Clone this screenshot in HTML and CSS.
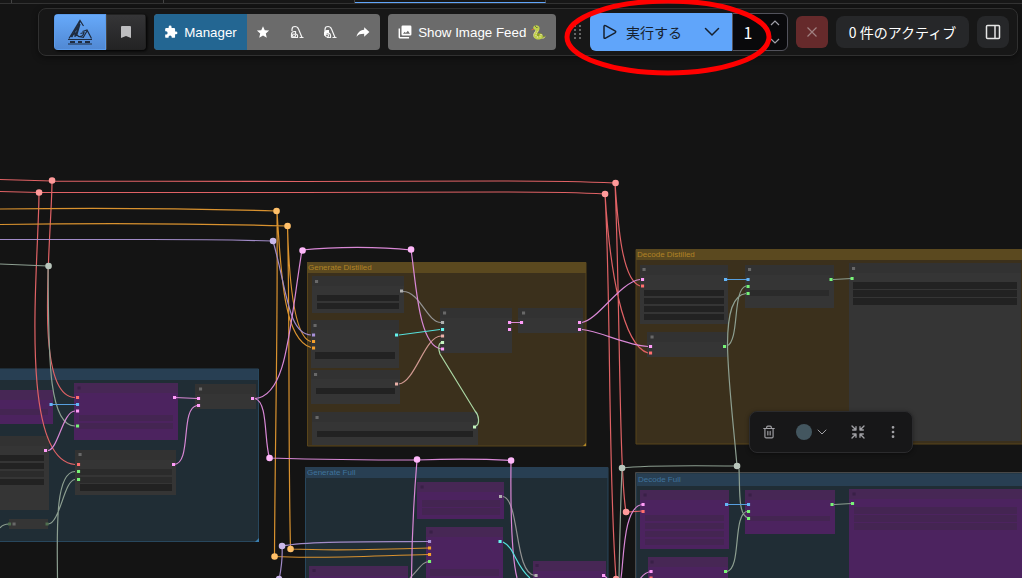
FILE: index.html
```html
<!DOCTYPE html>
<html lang="ja">
<head>
<meta charset="utf-8">
<meta name="viewport" content="width=device-width, initial-scale=1">
<title>Workflow</title>
<link rel="stylesheet" href="styles.css">
</head>
<body>
<div class="app">
  <div class="tabs">
    <div class="tab tab-edge"></div>
    <div class="tab tab-small"></div>
    <div class="tab"></div>
    <div class="tab tab-active"></div>
  </div>

  <main class="workspace">
    <svg class="graph" aria-label="Node graph">
      <!-- groups -->
      <g class="group blue">
        <path class="group-body" d="M-10 369H258.500V541.500H-10z"/>
        <path class="group-title" d="M-10 369H258V380H-10z"/>
        <path class="grip" d="M259 538v4h-4z"/>
      </g>
      <g class="group gold">
        <path class="group-body" d="M307.500 262.500H586V446H307.500z"/>
        <path class="group-title" d="M307 262H586V273H307z"/>
        <path class="grip" d="M586 443v3h-3z"/>
        <text x="308" y="270">Generate Distilled</text>
      </g>
      <g class="group blue">
        <path class="group-body" d="M305.500 467.500H608V620H305.500z"/>
        <path class="group-title" d="M305 467H608V478H305z"/>
        <text x="307" y="475">Generate Full</text>
      </g>
      <g class="group gold">
        <path class="group-body" d="M636 249.500H1400V444H636z"/>
        <path class="group-title" d="M636 249H1400V260H636z"/>
        <text x="637" y="257">Decode Distilled</text>
      </g>
      <g class="group blue">
        <path class="group-body" d="M636 473H1400V700H636z"/>
        <path class="group-title" d="M637 474H1400V486H637z"/>
        <path class="outline" d="M635.500 700V472.500H1400"/>
        <text x="638" y="482">Decode Full</text>
      </g>

      <!-- bypassed nodes -->
      <path class="node-purple" d="M-10 390H53V424H-10zM74 383H178V440H74zM417 482H504V519H417zM426 527H503V620H426zM309 566H408V620H309zM533 561H606V620H533zM640 490H729V549H640zM648 557H728V620H648zM745 490H835V534H745zM849 489H1400V700H849z"/>
      <path class="node-purple-head" d="M-10 390H53V400H-10zM74 383H178V393H74zM417 482H504V492H417zM426 527H503V537H426zM309 566H408V576H309zM533 561H606V571H533zM640 490H729V500H640zM648 557H728V567H648zM745 490H835V500H745zM849 489H1400V499H849z"/>
      <path class="field-purple" d="M-10 409H48V415H-10zM79 415H173V421H79zM79 423H173V429H79zM422 500H500V507H422zM422 508H500V515H422zM430 569H499V576H430zM645 515H724V521H645zM645 523H724V529H645zM645 531H724V537H645zM645 539H724V545H645zM750 516H830V521H750zM854 507H1017V514H854zM854 515H1017V522H854zM854 523H1017V530H854z"/>
      <path class="dots-purple" d="M79 388h.1M422 487h.1M431 532h.1M314 570.500h.1M537 565.500h.1M645 495h.1M652 562h.1M750 495h.1M854 494h.1"/>

      <!-- active nodes -->
      <path class="node-dark" d="M-10 436H49V510H-10zM75 450H176V495H75zM195 384H256V409H195zM9 519H48V529H9zM312 276H404V313H312zM311 320H399V368H311zM311 370H400V404H311zM312 412H478V445H312zM440 308H512V353H440zM518 308H583V333H518zM640 265H728V324H640zM647 332H727V357H647zM745 265H834V308H745zM849 263H1021V441H849z"/>
      <path class="node-dark-head" d="M-10 436H49V446H-10zM75 450H176V460H75zM195 384H256V394H195zM312 276H404V286H312zM311 320H399V330H311zM311 370H400V379H311zM312 412H478V422H312zM440 308H512V318H440zM518 308H583V318H518zM640 265H728V275H640zM647 332H727V342H647zM745 265H834V275H745zM849 263H1021V273H849z"/>
      <path class="field-dark" d="M-10 455H44V461H-10zM-10 463H44V469H-10zM-10 479H44V485H-10zM80 484H172V491H80zM317 295H399V301H317zM317 303H399V309H317zM315 352H395V359H315zM316 388H395V394H316zM317 431H473V437H317zM644 290H724V296H644zM644 298H724V304H644zM644 306H724V312H644zM644 314H724V320H644zM853 282H1017V289H853zM853 290H1017V297H853zM853 298H1017V305H853z"/>
      <path class="field-mid" d="M-10 471H44V477H-10zM80 469H172V475H80zM80 477H172V483H80zM750 290H829V296H750z"/>
      <path class="dots" d="M80 454.500h.1M200.500 389h.1M14 524h.1M316.500 281.500h.1M315 325.500h.1M315.500 374.500h.1M317 417.500h.1M444.500 313h.1M523.500 313h.1M644 269.500h.1M652 337h.1M749.500 269.500h.1M853.500 268.500h.1"/>

      <!-- links -->
      <g class="links">
        <path class="red" d="M0 179.500L52 181L300 181.500L500 181Q570 181 615 183M0 191.500L39 192.500H300L500 192Q570 192 605 194M52 181C52 235 32 397 75 397.500M39 192C39 260 17 460 75 464.500M615 183C618 225 622 280 640 286M615 183C620 300 619 470 626 512L643 511M605 194C611 300 608 470 616 578M605 194C610 270 622 345 648 353"/>
        <path class="orange" d="M0 209Q140 207 276 211M0 224.500Q150 222 287 226M277 211C278 330 275 440 274.500 556.500M277 211C281 280 285 340 311 347.500M287.500 226C290 330 288 440 290.500 549Q340 551 429 548M287.500 226C289 280 294 338 311 341.500M274.500 556.500C320 559 380 555.500 429 554.500"/>
        <path class="violet" d="M0 239.500H150Q220 239.500 273 241C287 290 288 334 311 335M279 580Q283 560 282 546C310 541 370 542 429 541.500"/>
        <path class="sage" d="M0 264L48 266C49 340 46 426 75 426M0 528Q3 524 9 524M48 524C60 524 64 480 75 479.500M57.500 578C57 530 55 472 75 471.500M622 468Q645 465 737 466M622 468Q620 520 619 578M737 466C733 420 728 380 727.500 345C727.500 312 733 295 746 293.500M727 346C740 340 732 290 746 286M739 469C740 490 738 515 748 518M727 571.500C742 568 732 513 748 511M833 279.500L852 278.500M834 504.500L852 503.500"/>
        <path class="gray" d="M403 291.500C420 291.500 427 322.500 441 322.500M503 496.500C520 500 514 574 535 575.500M410 578C420 568 422 562 429 561.500"/>
        <path class="pink" d="M48 450.500C58 450 63 411 75 411M174.500 397.500L198 398.500M174 464.500C192 464 180 408 197 405.500M255 398.500C287 396 289 330 302 250C335 246.500 380 246.500 411 250C416 280 418 345 441 349M255 398.500C268 402 264 440 269.500 458Q340 460 417 460Q470 458 511 460.500Q510 550 517 578M417 460Q412 520 411.500 578M509 322.500H522M582 322.500C598 320 620 282 640 279.500M582 329.500C600 331 625 345 648 346.500M643 504.500C623 505 624 560 621 578M640 579Q645 572 651 571.500M604 575.500L607 578"/>
        <path class="cyan" d="M399 335L440 329.500M503 542C515 548 515 565 530 578"/>
        <path class="salmon" d="M399 384C415 382 425 336 441 336"/>
        <path class="mint" d="M476 426C480 424 479 415 475 411L440 354Q437 345 441 342.500"/>
        <path class="sky" d="M51 404.500H77M726 279.500H748M726 504.500H748"/>
      </g>

      <!-- sockets -->
      <g class="sockets">
        <path class="red" d="M77.500 397.500h.1M78.500 464.500h.1M642.500 286h.1M650.500 353h.1M643 511.500h.1M651 578h.1"/>
        <path class="sky" d="M51 404.500h.1M77.500 404.500h.1M725.500 279.500h.1M748 279.500h.1M726.500 504.500h.1M748.500 504.500h.1"/>
        <path class="pink" d="M77.500 411h.1M174.500 397.500h.1M45.500 450.500h.1M173.500 464.500h.1M198.500 398.500h.1M198.500 405.500h.1M252.500 398.500h.1M442.500 349h.1M509.500 322.500h.1M509.500 329.500h.1M521.500 322.500h.1M579.500 322.500h.1M579.500 329.500h.1M642.500 279.500h.1M650.500 346.500h.1M643 504.500h.1M651 571.500h.1M603.500 575.500h.1"/>
        <path class="green" d="M77.500 426h.1M78.500 471.500h.1M78.500 479.500h.1M429.500 561.500h.1M724.500 346.500h.1M748 286.500h.1M748 293.500h.1M831 279.500h.1M852 278.500h.1M725.500 571.500h.1M748.500 511.500h.1M748.500 518.500h.1M832 504.500h.1M852.500 503.500h.1"/>
        <path class="dim" d="M9.500 524h.1M47 524h.1"/>
        <path class="gray" d="M401.500 291h.1M442.500 322.500h.1M500.500 496.500h.1M536 575.500h.1"/>
        <path class="violet" d="M313.500 335h.1M429.500 541.500h.1"/>
        <path class="orange" d="M313.500 341.500h.1M313.500 348h.1M429.500 548h.1M429.500 554.500h.1"/>
        <path class="cyan" d="M396.500 335h.1M442.500 329.500h.1M500 541.500h.1"/>
        <path class="salmon" d="M396.500 384h.1M442.500 336h.1"/>
        <path class="mint" d="M442.500 342.500h.1M474.500 427h.1"/>
      </g>

      <!-- reroute points -->
      <g class="reroutes">
        <path class="red" d="M52 180.500h.1M39 192.500h.1M615.500 183h.1M605 194h.1M626 512h.1M616 579h.1"/>
        <path class="orange" d="M276.500 211h.1M287.500 226h.1M290.500 549h.1M274.500 556.500h.1"/>
        <path class="violet" d="M273 241h.1M282 546h.1M279 579h.1"/>
        <path class="sage" d="M48.500 266h.1M622 468h.1M737 466h.1"/>
        <path class="pink" d="M302.500 250.500h.1M411 249.500h.1M269.500 458h.1M417 459.500h.1M511 460.500h.1"/>
      </g>
    </svg>

    <div class="node-tools" role="toolbar" aria-label="Selection">
      <button class="tool" aria-label="Delete"><svg width="14" height="14" viewBox="0 0 24 24"><path d="M3 6h18M19 6v14a2 2 0 0 1-2 2H7a2 2 0 0 1-2-2V6M8 6V4a2 2 0 0 1 2-2h4a2 2 0 0 1 2 2v2M10 11v6M14 11v6"/></svg></button>
      <button class="tool tool-color" aria-label="Color"><span class="swatch"></span><svg width="12" height="12" viewBox="0 0 24 24"><path d="M4 8l8 8 8-8"/></svg></button>
      <button class="tool" aria-label="Collapse"><svg width="16" height="16" viewBox="0 0 24 24"><path d="M3 3l6 6M9 4v5H4M21 3l-6 6M15 4v5h5M3 21l6-6M4 15h5v5M21 21l-6-6M20 15h-5v5"/></svg></button>
      <button class="tool" aria-label="More"><svg width="16" height="16" viewBox="0 0 24 24"><path class="thick" d="M12 5h.1M12 12h.1M12 19h.1"/></svg></button>
    </div>
  </main>

  <div class="toolbar" role="toolbar" aria-label="Actions">
    <div class="view-switch">
      <button class="view view-on" aria-label="Graph view"><svg width="26" height="26" viewBox="0 0 26 26" class="emblem"><path d="M2 19.500L13 1.500L16.500 7M13 2L8.500 17M12 3L5 18M4 18L11 8M9.500 17L13 5M10.500 8L10 17M11.500 17.500C15 18 16.500 16 17 13.500L13.500 14.500M15.500 12.500L20 11L24.500 19.500M16.500 18L20 12M8.500 14L11.500 17.500L17 18.500M4.500 18L8 13.500V18"/><path class="solid" d="M1 20.500H25M1 25H25"/><path class="piers" d="M3 23H8M11 23H15M18 23H23"/></svg></button>
      <button class="view" aria-label="Bookmarks"><svg width="12" height="14" viewBox="0 0 12 14"><path fill="#bdbdbf" d="M1 2Q1 1 2 1H10Q11 1 11 2V13L6 11L1 13z"/></svg></button>
    </div>

    <div class="manager-group">
      <button class="manager"><svg width="14" height="14" viewBox="0 0 24 24"><path fill="#fff" d="M20.500 11H19V7a2 2 0 0 0-2-2h-4V3.500a2.500 2.500 0 0 0-5 0V5H4a2 2 0 0 0-2 2v3.800h1.500a2.700 2.700 0 0 1 0 5.400H2V20a2 2 0 0 0 2 2h3.800v-1.500a2.700 2.700 0 0 1 5.400 0V22H17a2 2 0 0 0 2-2v-4h1.500a2.500 2.500 0 0 0 0-5z"/></svg>Manager</button>
      <button class="mini" aria-label="Favorites"><svg width="14" height="14" viewBox="0 0 24 24"><path fill="#fff" d="M12 2l3 7 7.500.6-5.700 5 1.700 7.400-6.500-4-6.500 4 1.700-7.400-5.700-5L9 9z"/></svg></button>
      <button class="mini" aria-label="Unload models"><svg width="14" height="14" viewBox="0 0 14 14"><path class="vac" d="M2 6V4.500Q2 1.500 5 1.500Q7.500 1.500 8.500 4L12 12.500M9.500 12.500H13.500M1.500 12.500V9.500Q1.500 6.500 4.500 6.500H5.500V9M1.500 12.500H7.500Q8 9 5.500 9"/><circle class="vac" cx="4" cy="10.500" r="1.500"/></svg></button>
      <button class="mini" aria-label="Free cache"><svg width="14" height="14" viewBox="0 0 14 14"><path class="vac" d="M2 6V4.500Q2 1.500 5 1.500Q7.500 1.500 8.500 4L12 12.500M9.500 12.500H13.500M4 12.500H7.500Q8 9 6 8"/><path fill="#fff" d="M1 8Q1 5 4 5H6V9L4 8L3 10L1 11z"/><circle class="vac" cx="4" cy="10.500" r="1.500"/></svg></button>
      <button class="mini" aria-label="Share"><svg width="14" height="14" viewBox="0 0 24 24"><path fill="#fff" d="M14 4l9 8-9 8v-5C8 15 4 16 1 20c1-6 5-11 13-12z"/></svg></button>
    </div>

    <button class="feed"><svg width="14" height="14" viewBox="0 0 24 24"><path fill="#fff" fill-rule="evenodd" d="M8 1H21a2 2 0 0 1 2 2V16a2 2 0 0 1-2 2H8a2 2 0 0 1-2-2V3a2 2 0 0 1 2-2zM8.500 15H20.500L17 10L13.500 13.500L11.500 11.500zM1 6H3.500V20.500H19V23H3a2 2 0 0 1-2-2z"/></svg>Show Image Feed 🐍</button>

    <div class="handle"><svg width="9" height="14" viewBox="0 0 9 14"><path d="M1 1h2M1 5h2M1 9h2M1 13h2M6 1h2M6 5h2M6 9h2M6 13h2"/></svg></div>

    <div class="run-group">
      <button class="run"><svg width="16" height="16" viewBox="0 0 16 16"><path d="M2 2.500Q2 1 3.500 1.600L13 6.800Q14.500 7.800 13 8.800L3.500 14.200Q2 14.700 2 13.500z"/></svg>実行する</button>
      <button class="run-menu" aria-label="Run options"><svg width="16" height="16" viewBox="0 0 16 16"><path d="M1.500 4.500L8 11L14.500 4.500"/></svg></button>
      <div class="count">
        <input class="count-input" type="text" value="1" aria-label="Batch count">
        <div class="steps">
          <button class="step" aria-label="Increase"><svg width="10" height="6" viewBox="0 0 10 6"><path d="M1 5l4-4 4 4"/></svg></button>
          <button class="step" aria-label="Decrease"><svg width="10" height="6" viewBox="0 0 10 6"><path d="M1 1l4 4 4-4"/></svg></button>
        </div>
      </div>
      <svg class="callout" width="208" height="78" viewBox="0 0 208 78"><ellipse cx="104" cy="39" rx="101" ry="36"/></svg>
    </div>

    <button class="stop" aria-label="Cancel"><svg width="12" height="12" viewBox="0 0 12 12"><path d="M1.500 1.500l9 9M10.500 1.500l-9 9"/></svg></button>
    <button class="active-jobs">0 件のアクティブ</button>
    <button class="panel-toggle" aria-label="Toggle panel"><svg width="16" height="16" viewBox="0 0 16 16"><rect x="1.500" y="1.500" width="13" height="13" rx="1"/><path d="M10 1.500v13"/></svg></button>
  </div>
</div>
</body>
</html>
```
FILE: styles.css
```css
* { box-sizing: border-box; }
body { margin: 0; background: #141414; color: #fff; font-family: "Liberation Sans", Arial, sans-serif; }
button { margin: 0; padding: 0; border: 0; background: none; color: inherit; font-family: inherit; display: flex; align-items: center; justify-content: center; cursor: pointer; }
svg { display: block; fill: none; flex: none; }

.app { position: relative; height: 100vh; display: flex; flex-direction: column; overflow: hidden; }
.tabs { position: absolute; top: 0; left: 0; right: 0; z-index: 1; display: flex; height: 4px; background: #171717; border-bottom: 1px solid #333; }
.tab { width: 191px; border-right: 1px solid #444; }
.tab-edge { width: 12px; }
.tab-small { width: 152px; }
.tab-active { border-bottom: 1px solid #60a5fa; }
.workspace { position: relative; flex: 1; }

/* graph */
.graph { width: 100%; height: 100%; }
.graph text { font-family: "Liberation Sans", Arial, sans-serif; font-size: 8px; }
.blue .group-body { fill: #202d35; stroke: #28475d; }
.blue .group-title { fill: #283f53; }
.blue .grip { fill: #3a7eae; }
.blue text { fill: #3f739c; }
.gold .group-body { fill: #3b301c; stroke: #59451b; }
.gold .group-title { fill: #5b491f; }
.gold .grip { fill: #b58a27; }
.gold text { fill: #b08326; }
.outline { stroke: #484848; }
.node-purple { fill: #4c235f; }
.node-purple-head { fill: #472755; }
.field-purple { fill: #442552; }
.node-dark { fill: #353535; }
.node-dark-head { fill: #323232; }
.field-dark { fill: #222; }
.field-mid { fill: #2b2b2b; }
.dots { stroke: #686868; }
.dots-purple { stroke: #392047; }
.dots, .dots-purple, .sockets { stroke-width: 3; stroke-linecap: butt; }
.dots path, .sockets path { stroke-linecap: square; }
.dots, .dots-purple { stroke-linecap: square; }
.links { stroke-width: 1.2; }
.reroutes { stroke-width: 6.500; stroke-linecap: round; }
.links .red { stroke: #e06265; }
.links .orange { stroke: #d9922f; }
.links .violet { stroke: #a18bc8; }
.links .sage { stroke: #8d9f91; }
.links .gray { stroke: #929292; }
.links .pink { stroke: #d988d6; }
.links .cyan { stroke: #56e0dc; }
.links .salmon { stroke: #cf9890; }
.links .mint { stroke: #abd7a4; }
.links .sky { stroke: #579fdf; }
.sockets .red { stroke: #ff6e6e; }
.sockets .sky { stroke: #64b5f6; }
.sockets .pink { stroke: #ff9cf9; }
.sockets .green { stroke: #77f477; }
.sockets .dim { stroke: #4f6f4f; }
.sockets .gray { stroke: #b0b0b0; }
.sockets .violet { stroke: #a890d8; }
.sockets .orange { stroke: #f5a02c; }
.sockets .cyan { stroke: #66f5ee; }
.sockets .salmon { stroke: #e9b0a8; }
.sockets .mint { stroke: #c5f6c0; }
.reroutes .red { stroke: #ff9a9a; }
.reroutes .orange { stroke: #ffc069; }
.reroutes .violet { stroke: #c9b8ea; }
.reroutes .sage { stroke: #b9c6bc; }
.reroutes .pink { stroke: #ffb8fa; }

/* selection tools float beside the selected group */
.node-tools { position: absolute; left: 749px; top: 411px; display: flex; align-items: center; gap: 3px; height: 42px; padding: 4px 3px; border: 1px solid #2b2b2d; border-radius: 8px; background: #171718; box-shadow: 0 1px 4px #0006; }
.tool { width: 32px; height: 32px; }
.tool svg { stroke: #a0a0a4; stroke-width: 2; stroke-linecap: round; stroke-linejoin: round; }
.tool .thick { stroke-width: 4; }
.tool-color { width: 51px; gap: 4px; padding-left: 8px; justify-content: flex-start; }
.swatch { width: 16px; height: 16px; border-radius: 50%; background: #43565f; }

/* toolbar */
.toolbar { position: absolute; top: 8px; right: 4px; z-index: 2; display: flex; align-items: center; gap: 8px; height: 48px; padding: 0 8px 0 15px; border: 1px solid #303030; border-radius: 8px; background: #171717; box-shadow: 0 2px 6px #0006; white-space: nowrap; }
.view-switch { display: flex; height: 36px; border-radius: 4px; overflow: hidden; box-shadow: 1px 1px 3px #000; }
.view { width: 40px; background: linear-gradient(#353537, #232324); border: 1px solid #222; border-left-color: #454545; }
.view-on { width: 52px; background: linear-gradient(#66a9fa, #5189d4); border: 1px solid #5b9bea; }
.emblem { stroke: #1f2c40; stroke-width: 1.2; }
.emblem .solid { stroke-width: 1; }
.emblem .piers { stroke-width: 2; }
.manager-group { display: flex; width: 226px; height: 36px; border-radius: 4px; overflow: hidden; background: #6b6b6b; }
.manager { gap: 6px; padding: 0 10px; background: #236692; }
.mini { flex: 1; }
.vac { stroke: #f4f4f4; stroke-width: 1.2; }
.feed { gap: 6px; height: 36px; padding: 0 9px 0 10px; border-radius: 4px; background: #6b6b6b; }
.handle { display: flex; justify-content: flex-end; width: 18px; }
.handle svg { stroke: #b5b5b5; stroke-width: 1; }
.run-group { position: relative; display: flex; height: 38px; }
.run, .run-menu { background: #60a5fa; color: #16212f; }
.run svg, .run-menu svg { stroke: #16212f; stroke-width: 1.500; stroke-linejoin: round; stroke-linecap: round; }
.run { gap: 8px; padding: 0 10px 0 12px; border-radius: 6px 0 0 6px; font-family: "Noto Sans CJK JP", sans-serif; font-size: 14px; }
.run-menu { width: 40px; }
.count { display: flex; width: 56px; border: 1px solid #52525b; border-radius: 0 6px 6px 0; background: #09090b; }
.count-input { width: 30px; padding: 0; border: 0; background: none; color: #fff; text-align: center; font-family: "Noto Sans CJK JP", sans-serif; font-size: 16px; }
.steps { display: flex; flex-direction: column; flex: 1; }
.step { flex: 1; }
.step svg { stroke: #a1a1aa; stroke-width: 1.2; }
.callout { position: absolute; left: -26px; top: -15px; z-index: 3; stroke: #f00; stroke-width: 5; pointer-events: none; }
.stop { width: 32px; height: 32px; border-radius: 6px; background: #662a2b; }
.stop svg { stroke: #a08080; stroke-width: 1.2; }
.active-jobs { height: 32px; padding: 0 12px; min-width: 133px; border-radius: 8px; background: #262729; font-family: "Noto Sans CJK JP", sans-serif; font-size: 14px; }
.panel-toggle { width: 32px; height: 32px; border-radius: 8px; background: #262729; }
.panel-toggle svg { stroke: #e5e5e5; stroke-width: 1.500; }
```
